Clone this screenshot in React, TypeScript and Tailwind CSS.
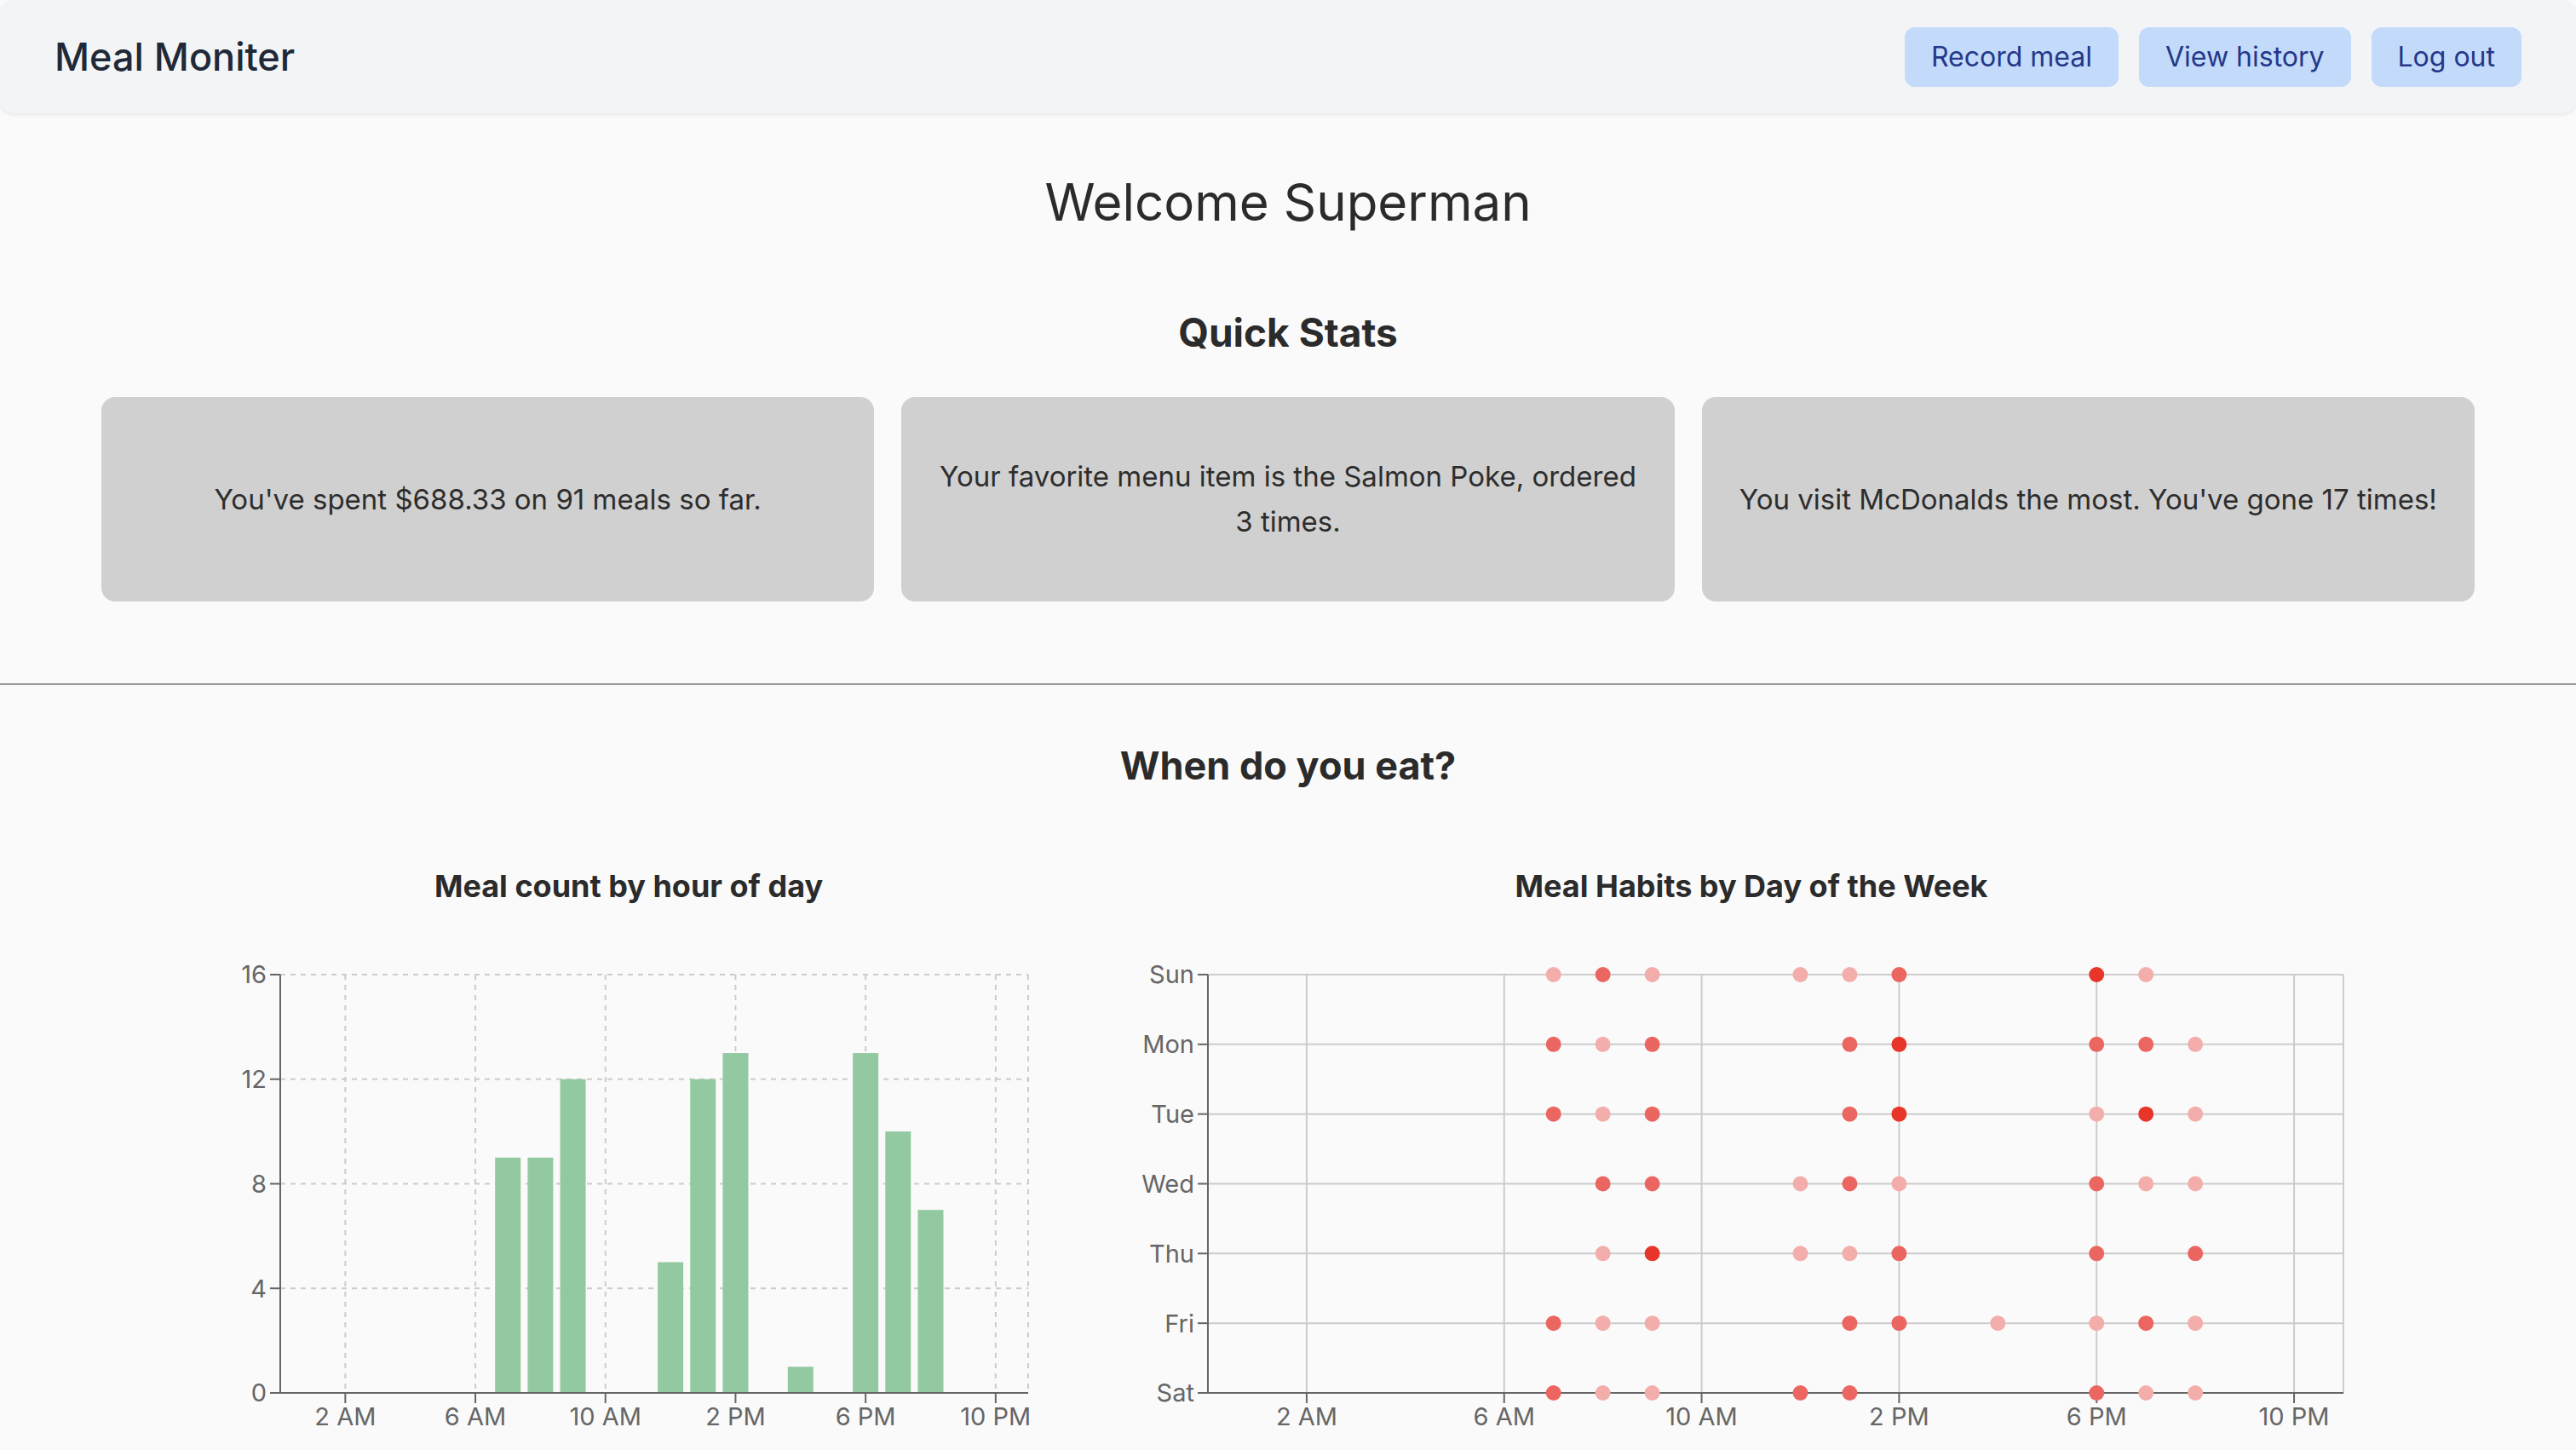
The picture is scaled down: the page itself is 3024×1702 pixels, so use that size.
import React from "react"

const hourLabel = (h: number) => (h < 12 ? `${h} AM` : `${h - 12} PM`)
const tickHours = [2, 6, 10, 14, 18, 22]

const barData: Record<number, number> = { 7: 9, 8: 9, 9: 12, 12: 5, 13: 12, 14: 13, 16: 1, 18: 13, 19: 10, 20: 7 }

// [hour, level] per weekday; level 1 = few meals, 3 = many
const habits: [string, [number, number][]][] = [
  ["Sun", [[7, 1], [8, 2], [9, 1], [12, 1], [13, 1], [14, 2], [18, 3], [19, 1]]],
  ["Mon", [[7, 2], [8, 1], [9, 2], [13, 2], [14, 3], [18, 2], [19, 2], [20, 1]]],
  ["Tue", [[7, 2], [8, 1], [9, 2], [13, 2], [14, 3], [18, 1], [19, 3], [20, 1]]],
  ["Wed", [[8, 2], [9, 2], [12, 1], [13, 2], [14, 1], [18, 2], [19, 1], [20, 1]]],
  ["Thu", [[8, 1], [9, 3], [12, 1], [13, 1], [14, 2], [18, 2], [20, 2]]],
  ["Fri", [[7, 2], [8, 1], [9, 1], [13, 2], [14, 2], [16, 1], [18, 1], [19, 2], [20, 1]]],
  ["Sat", [[7, 2], [8, 1], [9, 1], [12, 2], [13, 2], [18, 2], [19, 1], [20, 1]]],
]

const dotColors = ["", "#f3aeab", "#eb6661", "#e8352a"]

const axisText = { fontFamily: "Inter, 'Liberation Sans', sans-serif", fontSize: 29, fill: "#666" }

function HourBarChart() {
  const L = 119, R = 997, T = 20, B = 511
  const x = (h: number) => L + (h * (R - L)) / 23
  const y = (v: number) => B - (v * (B - T)) / 16
  return (
    <svg width={1056} height={580} className="mt-[60px] block">
      {[4, 8, 12, 16].map((v) => (
        <line key={v} x1={L} x2={R} y1={y(v)} y2={y(v)} stroke="#ccc" strokeWidth={2} strokeDasharray="6 6" />
      ))}
      {[...tickHours, 23].map((h) => (
        <line key={h} x1={x(h)} x2={x(h)} y1={T} y2={B} stroke="#ccc" strokeWidth={2} strokeDasharray="6 6" />
      ))}
      {Object.entries(barData).map(([h, v]) => (
        <rect key={h} x={x(+h) - 15} y={y(v)} width={30} height={B - y(v)} fill="#93c9a0" />
      ))}
      <line x1={L} x2={L} y1={T} y2={B} stroke="#666" strokeWidth={2} />
      <line x1={L} x2={R} y1={B} y2={B} stroke="#666" strokeWidth={2} />
      {[0, 4, 8, 12, 16].map((v) => (
        <g key={v}>
          <line x1={L - 12} x2={L} y1={y(v)} y2={y(v)} stroke="#666" strokeWidth={2} />
          <text x={L - 16} y={y(v)} dy="0.36em" textAnchor="end" style={axisText}>{v}</text>
        </g>
      ))}
      {tickHours.map((h) => (
        <g key={h}>
          <line x1={x(h)} x2={x(h)} y1={B} y2={B + 12} stroke="#666" strokeWidth={2} />
          <text x={x(h)} y={B + 38} textAnchor="middle" style={axisText}>{hourLabel(h)}</text>
        </g>
      ))}
    </svg>
  )
}

function WeekScatterChart() {
  const L = 120, R = 1453, T = 20, B = 511
  const x = (h: number) => L + (h * (R - L)) / 23
  const y = (d: number) => T + (d * (B - T)) / 6
  return (
    <svg width={1516} height={580} className="mt-[60px] block">
      {habits.map((_, d) => (
        <line key={d} x1={L} x2={R} y1={y(d)} y2={y(d)} stroke="#ccc" strokeWidth={2} />
      ))}
      {[...tickHours, 23].map((h) => (
        <line key={h} x1={x(h)} x2={x(h)} y1={T} y2={B} stroke="#ccc" strokeWidth={2} />
      ))}
      <line x1={L} x2={L} y1={T} y2={B} stroke="#666" strokeWidth={2} />
      <line x1={L} x2={R} y1={B} y2={B} stroke="#666" strokeWidth={2} />
      {habits.map(([day], d) => (
        <g key={day}>
          <line x1={L - 12} x2={L} y1={y(d)} y2={y(d)} stroke="#666" strokeWidth={2} />
          <text x={L - 16} y={y(d)} dy="0.36em" textAnchor="end" style={axisText}>{day}</text>
        </g>
      ))}
      {tickHours.map((h) => (
        <g key={h}>
          <line x1={x(h)} x2={x(h)} y1={B} y2={B + 12} stroke="#666" strokeWidth={2} />
          <text x={x(h)} y={B + 38} textAnchor="middle" style={axisText}>{hourLabel(h)}</text>
        </g>
      ))}
      {habits.map(([day, pts], d) =>
        pts.map(([h, lvl]) => <circle key={day + h} cx={x(h)} cy={y(d)} r={9} fill={dotColors[lvl]} />)
      )}
    </svg>
  )
}

export default function App() {
  const stats = [
    "You've spent $688.33 on 91 meals so far.",
    "Your favorite menu item is the Salmon Poke, ordered 3 times.",
    "You visit McDonalds the most. You've gone 17 times!",
  ]

  return (
    <div className="min-h-screen bg-[#fafafa] font-['Inter','Liberation_Sans',sans-serif] text-[#2b2b2b]">
      <nav className="flex h-[133px] items-center justify-between rounded-2xl bg-[#f3f4f6] px-16 shadow-[0_2px_4px_rgba(0,0,0,0.08)]">
        <span className="text-[45px] font-medium text-[#1f2937]">Meal Moniter</span>
        <div className="flex gap-6">
          {["Record meal", "View history", "Log out"].map((label) => (
            <button key={label} className="h-[70px] rounded-xl bg-[#c3dafa] px-[31px] text-[32px] text-[#23388a]">
              {label}
            </button>
          ))}
        </div>
      </nav>

      <main>
        <h1 className="pt-[64px] text-center text-[60px] leading-[80px]">Welcome Superman</h1>
        <h2 className="mt-[83px] text-center text-[46px] font-bold leading-[60px]">Quick Stats</h2>

        <div className="mt-[46px] grid grid-cols-3 gap-8 px-[119px]">
          {stats.map((s) => (
            <div
              key={s}
              className="flex h-[240px] items-center justify-center rounded-2xl bg-[#d0d0d0] px-10 text-center text-[33px] leading-[53px] text-[#2d2d2d]"
            >
              {s}
            </div>
          ))}
        </div>

        <hr className="mt-[96px] border-t-2 border-[#9b9b9b]" />

        <h2 className="mt-[65px] text-center text-[45px] font-bold leading-[60px]">When do you eat?</h2>

        <div className="mt-[87px] flex justify-center gap-8">
          <div className="w-[1056px]">
            <h3 className="text-center text-[36px] font-bold leading-[48px]">Meal count by hour of day</h3>
            <HourBarChart />
          </div>
          <div className="w-[1516px]">
            <h3 className="text-center text-[36px] font-bold leading-[48px]">Meal Habits by Day of the Week</h3>
            <WeekScatterChart />
          </div>
        </div>
      </main>
    </div>
  )
}
